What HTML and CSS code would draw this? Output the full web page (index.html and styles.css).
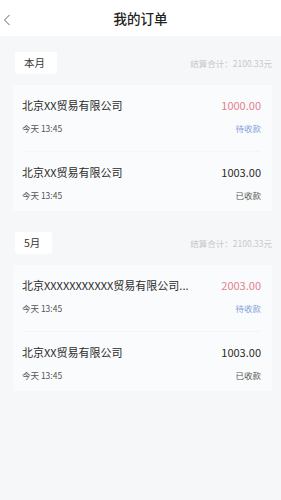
FILE: index.html
```html
<!DOCTYPE html>
<html lang="zh-CN">
<head>
  <meta charset="UTF-8" />
  <title>我的订单</title>
  <link rel="stylesheet" href="styles.css">
</head>
<body>
  <header class="top-bar">
    <a class="back" href="#">
      <svg width="8" height="12" viewBox="0 0 8 12"><path d="M6.5 1 L1.5 6 L6.5 11" fill="none" stroke="#666" stroke-width="1"/></svg>
    </a>
    <h1>我的订单</h1>
  </header>

  <section class="month">
    <div class="month-head">
      <span class="month-tag">本月</span>
      <span class="month-sum">结算合计：2100.33元</span>
    </div>
    <div class="card">
      <div class="order">
        <div class="row">
          <span class="name">北京XX贸易有限公司</span>
          <span class="amount pending">1000.00</span>
        </div>
        <div class="row sub">
          <span class="time">今天 13:45</span>
          <span class="status pending">待收款</span>
        </div>
      </div>
      <div class="order">
        <div class="row">
          <span class="name">北京XX贸易有限公司</span>
          <span class="amount">1003.00</span>
        </div>
        <div class="row sub">
          <span class="time">今天 13:45</span>
          <span class="status">已收款</span>
        </div>
      </div>
    </div>
  </section>

  <section class="month">
    <div class="month-head">
      <span class="month-tag">5月</span>
      <span class="month-sum">结算合计：2100.33元</span>
    </div>
    <div class="card">
      <div class="order">
        <div class="row">
          <span class="name">北京XXXXXXXXXXX贸易有限公司...</span>
          <span class="amount pending">2003.00</span>
        </div>
        <div class="row sub">
          <span class="time">今天 13:45</span>
          <span class="status pending">待收款</span>
        </div>
      </div>
      <div class="order">
        <div class="row">
          <span class="name">北京XX贸易有限公司</span>
          <span class="amount">1003.00</span>
        </div>
        <div class="row sub">
          <span class="time">今天 13:45</span>
          <span class="status">已收款</span>
        </div>
      </div>
    </div>
  </section>
</body>
</html>
```

FILE: styles.css
```css
body {
  margin: 0;
  background: #f6f7f9;
  font-family: "Noto Sans CJK SC", "Noto Sans", sans-serif;
  color: #333;
  min-height: 500px;
}
.top-bar {
  position: relative;
  height: 36px;
  background: #fff;
  display: flex;
  align-items: center;
  justify-content: center;
}
.top-bar h1 {
  margin: 0;
  font-size: 13.5px;
  font-weight: 500;
  color: #222;
  line-height: 20px;
}
.back {
  position: absolute;
  left: 3px;
  top: 14px;
  display: block;
  line-height: 0;
}
.month {
  margin: 16px 9px 0 13px;
}
.month + .month {
  margin-top: 21px;
}
.month-head {
  display: flex;
  align-items: center;
  justify-content: space-between;
  margin-bottom: 11px;
}
.month-tag {
  margin-left: 2px;
  background: #fff;
  height: 22px;
  line-height: 22px;
  padding: 0 12px 0 9px;
  font-size: 10.5px;
  color: #333;
  border-radius: 2px;
}
.month-sum {
  font-size: 8.5px;
  color: #c9c9c9;
}
.card {
  background: #fafbfc;
  padding: 0 11px 0 9px;
}
.order {
  padding: 12px 0 17px;
  border-bottom: 1px solid #f4f5f7;
}
.order:last-child {
  border-bottom: none;
  padding-bottom: 10px;
}
.row {
  display: flex;
  justify-content: space-between;
  align-items: center;
  line-height: 16px;
}
.row.sub {
  margin-top: 9px;
  line-height: 12px;
}
.name {
  font-size: 11px;
  color: #2b2b2b;
  white-space: nowrap;
}
.amount {
  font-size: 11px;
  color: #2b2b2b;
}
.amount.pending {
  color: #e6808e;
}
.time {
  font-size: 8.5px;
  color: #555;
}
.status {
  font-size: 8.5px;
  color: #555;
}
.status.pending {
  color: #7f9fdc;
}
```
